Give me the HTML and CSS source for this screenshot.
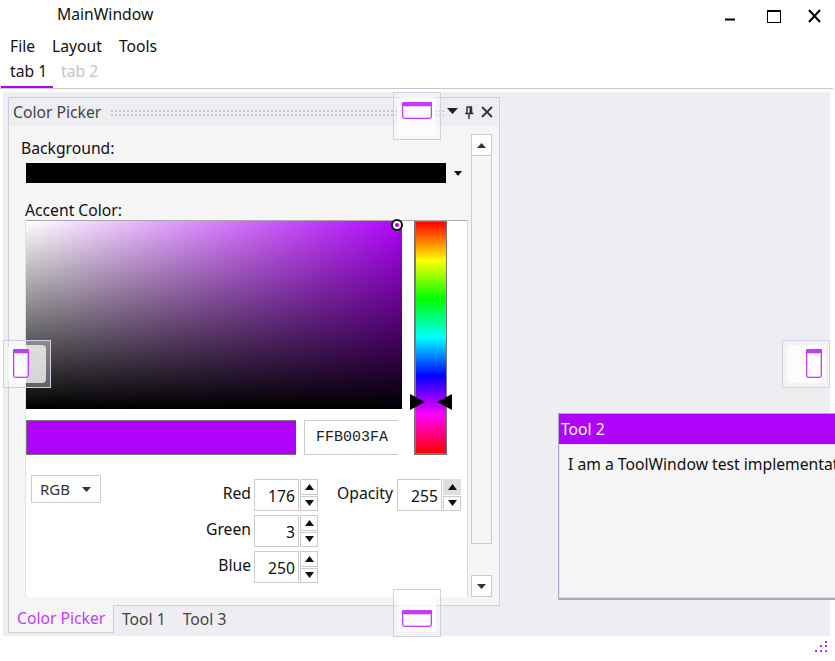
FILE: index.html
```html
<!DOCTYPE html>
<html lang="en">
<head>
<meta charset="utf-8">
<title>MainWindow</title>
<link rel="stylesheet" href="styles.css">
</head>
<body>
<div class="window">
  <header class="titlebar">
    <span class="title">MainWindow</span>
    <div class="win-buttons">
      <svg class="win-min" width="10" height="3"><rect width="10" height="2" y="0.5" fill="#000"/></svg>
      <svg class="win-max" width="14" height="13"><rect x="0.5" y="1" width="13" height="11.5" fill="none" stroke="#000"/><rect x="0" y="0" width="14" height="2" fill="#000"/></svg>
      <svg class="win-close" width="13" height="14"><path d="M1 1L12 13M12 1L1 13" stroke="#000" stroke-width="2" fill="none"/></svg>
    </div>
  </header>
  <nav class="menu"><span>File</span><span>Layout</span><span>Tools</span></nav>
  <div class="doc-tabs">
    <span class="doc-tab active">tab 1</span>
    <span class="doc-tab muted">tab 2</span>
  </div>
  <main class="dock">
    <section class="panel">
      <div class="panel-title">
        <span class="panel-name">Color Picker</span>
        <span class="grip"></span>
        <svg class="pt-menu" width="11" height="6"><polygon points="0,0 11,0 5.5,6" fill="#222"/></svg>
        <svg class="pt-pin" width="10" height="13"><path d="M2.5 1H8M3 1V7M7.5 1V7M1 7.5H9.5M5 8V13" stroke="#333" stroke-width="1.5" fill="none"/><rect x="5.5" y="1" width="2" height="6" fill="#333"/></svg>
        <svg class="pt-close" width="12" height="12"><path d="M1 1L11 11M11 1L1 11" stroke="#333" stroke-width="1.8" fill="none"/></svg>
      </div>
      <div class="panel-body">
        <div class="scroll-content">
          <div class="label bg-label">Background:</div>
          <div class="bg-row">
            <div class="bg-bar"></div>
            <svg class="bg-caret" width="8" height="5"><polygon points="0,0 8,0 4,5" fill="#111"/></svg>
          </div>
          <div class="label accent-label">Accent Color:</div>
          <div class="picker">
            <div class="picker-top">
              <div class="picker-left">
                <div class="sv"><span class="sv-thumb"></span></div>
                <div class="value-row">
                  <div class="swatch"></div>
                  <div class="hex">FFB003FA</div>
                </div>
              </div>
              <div class="hue">
                <svg class="hue-l" width="15" height="16"><polygon points="0,0 15,8 0,16" fill="#000"/></svg>
                <svg class="hue-r" width="15" height="16"><polygon points="15,0 0,8 15,16" fill="#000"/></svg>
              </div>
            </div>
            <div class="picker-bottom">
              <div class="mode"><span>RGB</span><svg width="9" height="5"><polygon points="0,0 9,0 4.5,5" fill="#333"/></svg></div>
              <div class="fields">
                <span class="f-label">Red</span>
                <div class="spin"><span class="spin-value">176</span><div class="spin-btns"><span class="sb up"><svg width="9" height="6"><polygon points="4.5,0 9,6 0,6" fill="#111"/></svg></span><span class="sb"><svg width="9" height="6"><polygon points="0,0 9,0 4.5,6" fill="#111"/></svg></span></div></div>
                <span class="f-label op">Opacity</span>
                <div class="spin"><span class="spin-value">255</span><div class="spin-btns"><span class="sb up hot"><svg width="9" height="6"><polygon points="4.5,0 9,6 0,6" fill="#111"/></svg></span><span class="sb"><svg width="9" height="6"><polygon points="0,0 9,0 4.5,6" fill="#111"/></svg></span></div></div>
                <span class="f-label">Green</span>
                <div class="spin"><span class="spin-value">3</span><div class="spin-btns"><span class="sb up"><svg width="9" height="6"><polygon points="4.5,0 9,6 0,6" fill="#111"/></svg></span><span class="sb"><svg width="9" height="6"><polygon points="0,0 9,0 4.5,6" fill="#111"/></svg></span></div></div>
                <span></span><span></span>
                <span class="f-label">Blue</span>
                <div class="spin"><span class="spin-value">250</span><div class="spin-btns"><span class="sb up"><svg width="9" height="6"><polygon points="4.5,0 9,6 0,6" fill="#111"/></svg></span><span class="sb"><svg width="9" height="6"><polygon points="0,0 9,0 4.5,6" fill="#111"/></svg></span></div></div>
              </div>
            </div>
          </div>
        </div>
        <div class="scrollbar">
          <span class="sc-btn"><svg width="9" height="5"><polygon points="4.5,0 9,5 0,5" fill="#333"/></svg></span>
          <span class="sc-thumb"></span>
          <span class="sc-btn"><svg width="9" height="5"><polygon points="0,0 9,0 4.5,5" fill="#333"/></svg></span>
        </div>
      </div>
      <div class="panel-tabs">
        <span class="p-tab active">Color Picker</span>
        <span class="p-tab">Tool 1</span>
        <span class="p-tab last">Tool 3</span>
      </div>
    </section>
  </main>
  <footer class="status">
    <svg width="14" height="12" fill="#c02cff"><rect x="11" y="0" width="2" height="2"/><rect x="6" y="4" width="2" height="2"/><rect x="11" y="4" width="2" height="2"/><rect x="1" y="9" width="2" height="2"/><rect x="6" y="9" width="2" height="2"/><rect x="11" y="9" width="2" height="2"/></svg>
  </footer>

  <aside class="tool-window">
    <div class="tool-head">Tool 2</div>
    <div class="tool-body">I am a ToolWindow test implementation and this text runs on</div>
  </aside>

  <div class="target t-top"><div class="t-inner"><span class="ico ico-h ico-top"></span></div></div>
  <div class="target t-left"><div class="t-inner"><span class="ico ico-v ico-left"></span></div></div>
  <div class="target t-right"><div class="t-inner"><span class="ico ico-v ico-right"></span></div></div>
  <div class="target t-bottom"><div class="t-inner"><span class="ico ico-h ico-bottom"></span></div></div>
</div>
</body>
</html>
```
FILE: styles.css
```css
* { box-sizing: border-box; }
html, body { margin: 0; padding: 0; overflow: hidden; background: #fff; }
body { font-family: "Noto Sans", "Open Sans", sans-serif; font-size: 15.7px; color: #111; }
.window { position: relative; width: 835px; height: 661px; overflow: hidden; display: flex; flex-direction: column; background: #fff; }

.titlebar { height: 29px; flex: none; display: flex; align-items: center; padding: 0 0 2px 57px; }
.title { font-size: 15.7px; }
.win-buttons { position: relative; margin-left: auto; width: 110px; height: 27px; display: flex; align-items: flex-start; }
.win-min { margin: 18px 0 0 0; }
.win-max { margin: 10px 0 0 32px; }
.win-close { margin: 9px 0 0 27px; }

.menu { height: 27px; flex: none; display: flex; align-items: center; padding: 6px 0 0 10px; gap: 17px; }

.doc-tabs { height: 33px; flex: none; display: flex; border-bottom: 1px solid #c8c8c8; padding-left: 1px; margin-right: 2px; }
.doc-tab { height: 32px; width: 52px; padding: 4px 0 0 9px; line-height: 22px; margin-bottom: -1px; }
.doc-tab.active { border-bottom: 2px solid #b003fa; height: 32px; }
.doc-tab.muted { width: auto; color: #c4c4c4; padding-left: 8px; }

.dock { flex: none; height: 544px; margin: 3px 5px 0 3px; background: #eeeef2; padding: 5px; }
.panel { width: 492px; height: 535px; border-style: solid; border-color: #cccedb; border-width: 1px 1px 0 1px; display: flex; flex-direction: column; background: #f5f5f5; }
.panel-title { height: 28px; flex: none; background: #eeeef2; display: flex; align-items: center; padding-left: 4px; color: #444; }
.grip { flex: 1; height: 7px; margin: 0 3px 0 9px; background-image: radial-gradient(circle, #c6c6d0 1.1px, transparent 1.4px); background-size: 4px 4px; }
.pt-menu { margin: 0 0 2px 0; }
.pt-pin { margin-left: 6px; }
.pt-close { margin: 0 6px 0 7px; }

.panel-body { flex: 1; min-height: 0; display: flex; }
.scroll-content { width: 462px; padding: 6px 0 0 0; display: flex; flex-direction: column; }
.label { line-height: 22px; padding-left: 12px; }
.bg-label { height: 31px; padding-top: 5px; }
.bg-row { display: flex; align-items: center; padding-left: 17px; height: 20px; margin-top: 0; }
.bg-bar { width: 420px; height: 20px; background: #000; }
.bg-caret { margin-left: 8px; }
.accent-label { margin-top: 16px; padding-left: 16px; height: 21px; }
.picker { margin-left: 17px; width: 442px; height: 377px; background: #fff; border-top: 1px solid #a9a9a9; border-right: 1px solid #dcdcdc; box-shadow: -1px 0 0 #e2e2e6; }
.picker-top { display: flex; height: 235px; }
.picker-left { width: 376px; }
.sv { position: relative; height: 188px; background: linear-gradient(to top, #000, rgba(0,0,0,0)), linear-gradient(to right, #fff, #b003fa); }
.sv-thumb { position: absolute; left: 365px; top: -2px; width: 12px; height: 12px; border-radius: 50%; border: 2px solid #111; background: #fff; }
.sv-thumb::after { content: ""; position: absolute; left: 2px; top: 2px; width: 4px; height: 4px; border-radius: 50%; background: #b003fa; }
.value-row { display: flex; margin-top: 11px; gap: 8px; }
.swatch { width: 270px; height: 35px; background: #b003fa; border-top: 1px solid #777; border-bottom: 1px solid #777; border-left: 1px solid #777; }
.hex { width: 94px; height: 35px; border: 1px solid #ccc; border-right: 0; font-family: "Liberation Mono", monospace; font-size: 15px; line-height: 34px; padding-left: 11px; color: #222; }
.hue { position: relative; margin-left: 12px; width: 33px; height: 234px; border: 2px solid #777; border-top-width: 1px; border-right-width: 1px; background: linear-gradient(to bottom, #f00 0%, #ff0 16.66%, #0f0 33.33%, #0ff 50%, #00f 66.66%, #f0f 83.33%, #f00 100%); }
.hue-l { position: absolute; left: -6px; top: 172px; }
.hue-r { position: absolute; right: -6px; top: 172px; }

.picker-bottom { display: flex; align-items: flex-start; padding: 19px 0 0 5px; }
.mode { width: 70px; height: 28px; border: 1px solid #ccc; display: flex; align-items: center; padding-left: 8px; gap: 12px; color: #333; font-size: 15px; }
.fields { display: grid; grid-template-columns: 54px 64px 79px 64px; grid-auto-rows: 32px; row-gap: 4px; margin: 4px 0 0 99px; }
.f-label { text-align: right; padding-right: 3px; line-height: 29px; }
.f-label.op { padding-right: 4px; }
.spin { display: flex; height: 32px; }
.spin-value { width: 45px; height: 32px; border: 1px solid #ccc; text-align: right; padding-right: 3px; line-height: 33px; }
.spin-btns { width: 18px; margin-left: 1px; display: flex; flex-direction: column; gap: 1px; }
.sb { height: 15px; flex: 1; border: 1px solid #ccc; display: flex; align-items: center; justify-content: center; background: #fff; }
.sb.hot { background: #dedede; border-color: #dedede; }

.scrollbar { width: 21px; height: 463px; margin-top: 8px; display: flex; flex-direction: column; }
.sc-btn { height: 22px; flex: none; border: 1px solid #ccc; background: #fff; display: flex; align-items: center; justify-content: center; }
.sc-thumb { height: 388px; flex: none; margin-bottom: 31px; border: 1px solid #ccc; border-top: 0; }

.panel-tabs { height: 27px; flex: none; display: flex; border-top: 1px solid #cccedb; background: #eeeef2; margin: 0 -1px; align-items: flex-start; }
.p-tab { padding: 0 8px; line-height: 26px; color: #444; }
.p-tab.last { margin-left: 1px; }
.p-tab.active { margin-top: -1px; height: 28px; width: 106px; padding: 0 0 0 8px; background: #f5f5f5; border: 1px solid #cccedb; border-top: 0; color: #c23cff; line-height: 27px; }

.status { flex: 1; display: flex; justify-content: flex-end; padding: 5px 7px 0 0; }

.tool-window { position: absolute; left: 558px; top: 413px; width: 300px; height: 187px; border: 1px solid #a9abc6; border-bottom-width: 2px; display: flex; flex-direction: column; background: #f5f5f5; }
.tool-head { height: 30px; flex: none; background: #b003fa; color: #fff; padding-left: 2px; line-height: 31px; }
.tool-body { flex: 1; padding: 8px 0 0 8px; white-space: nowrap; overflow: hidden; line-height: 22px; border-top: 1px solid #e0e0e8; border-left: 1px solid #e4e4ea; border-bottom: 1px solid #dcdce4; }

.target { position: absolute; width: 48px; height: 48px; border: 1px solid #d0d0e2; background: rgba(255,255,255,0.3); padding: 4px; }
.t-inner { width: 38px; height: 38px; border-radius: 4px; background: rgba(255,255,255,0.72); position: relative; }
.t-top { left: 393px; top: 92px; }
.t-left { left: 3px; top: 340px; }
.t-right { left: 782px; top: 340px; }
.t-bottom { left: 393px; top: 589px; }
.ico { position: absolute; border: 1px solid #c23cff; border-top: 4px solid #c23cff; border-radius: 1px 1px 3px 3px; box-shadow: inset 0 0 0 1px rgba(194,60,255,.3); background: rgba(255,255,255,.5); }
.ico-h { width: 30px; height: 17px; }
.ico-v { width: 16px; height: 29px; }
.ico-top { left: 4px; top: 5px; }
.ico-bottom { left: 4px; top: 16px; }
.ico-left { left: 5px; top: 4px; }
.ico-right { left: 19px; top: 4px; }
```
